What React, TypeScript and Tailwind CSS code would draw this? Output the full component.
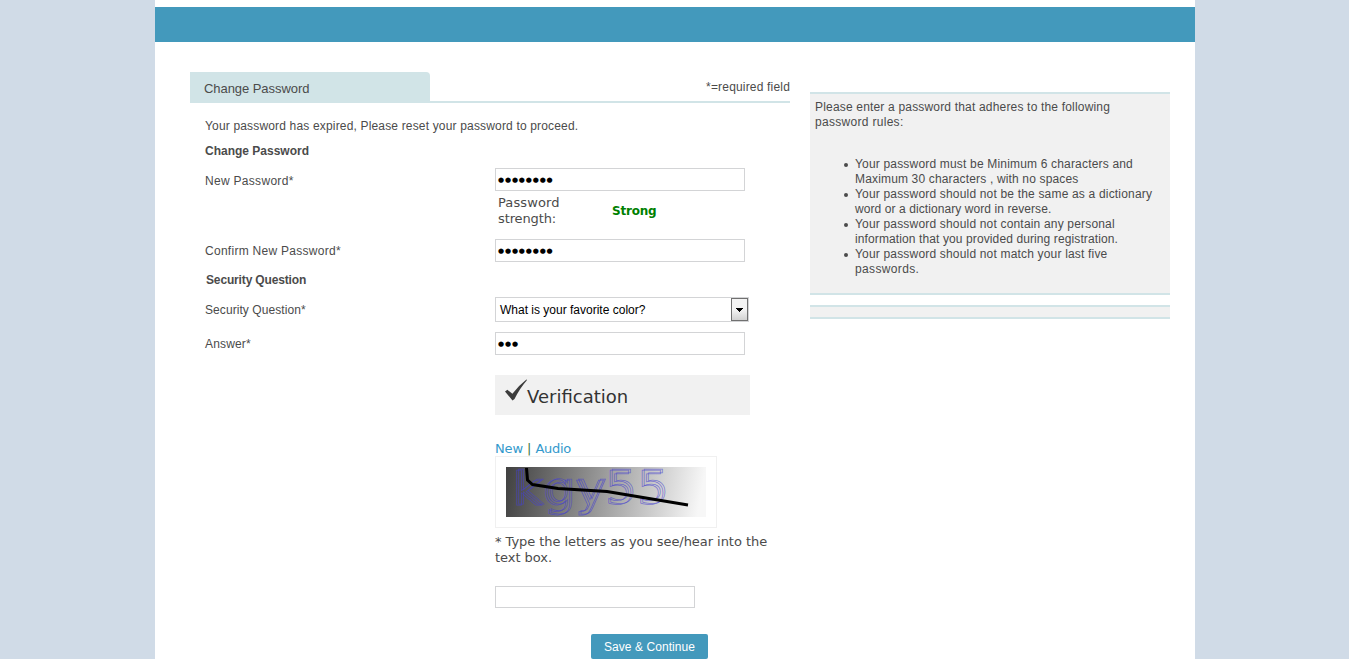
import type { ReactNode } from "react";

const verdana = "font-['DejaVu_Sans',sans-serif] text-[13px] leading-4";

function Field({ value = "", className = "" }: { value?: string; className?: string }) {
  return (
    <div className={`flex h-[23px] w-[250px] items-center border border-[#d3d4d6] bg-white pl-[2px] font-['DejaVu_Sans',sans-serif] text-[7px] leading-none tracking-[0.83px] text-black ${className}`}>
      <span className="relative top-px">{value}</span>
    </div>
  );
}

function Row({ label, className = "", labelClass = "", children }: { label: string; className?: string; labelClass?: string; children?: ReactNode }) {
  return (
    <div className={`flex items-start ${className}`}>
      <label className={`w-[305px] shrink-0 pl-[15px] ${labelClass}`}>{label}</label>
      {children}
    </div>
  );
}

const rules = [
  { first: "Your password must be Minimum 6 characters and", second: "Maximum 30 characters , with no spaces", tight: "tracking-[0.16px]" },
  { first: "Your password should not be the same as a dictionary", second: "word or a dictionary word in reverse.", tight: "tracking-[0.08px]" },
  { first: "Your password should not contain any personal", second: "information that you provided during registration.", tight: "tracking-[0.11px]" },
  { first: "Your password should not match your last five", second: "passwords.", tight: "tracking-[0.35px]" },
];

const glyphs = [
  { c: "k", x: 6, y: 38, w: 30 },
  { c: "g", x: 37, y: 38, w: 31 },
  { c: "y", x: 69, y: 38, w: 30 },
  { c: "5", x: 99, y: 37, w: 30 },
  { c: "5", x: 131, y: 37, w: 30 },
];

function Captcha() {
  return (
    <svg width="200" height="50" viewBox="0 0 200 50" className="block overflow-visible">
      <defs>
        <linearGradient id="shade" gradientUnits="userSpaceOnUse" x1="0" y1="0" x2="194" y2="34">
          <stop offset="0" stopColor="#404040" />
          <stop offset="1" stopColor="#f7f7f7" />
        </linearGradient>
      </defs>
      <rect width="200" height="50" fill="url(#shade)" />
      <g fill="none" stroke="#4540d0" strokeOpacity="0.62" strokeWidth="0.75" fontFamily="DejaVu Sans" fontSize="46">
        {glyphs.map((g, i) => (
          <g key={i}>
            <text x={g.x} y={g.y} textLength={g.w} lengthAdjust="spacingAndGlyphs">{g.c}</text>
            <text x={g.x + 2} y={g.y - 1} textLength={g.w} lengthAdjust="spacingAndGlyphs">{g.c}</text>
          </g>
        ))}
      </g>
      <path d="M20.5 1 21.5 13 26.5 17.5 52 21.5 101 24.5 182 38" fill="none" stroke="#000" strokeWidth="3" />
    </svg>
  );
}

export default function App() {
  return (
    <div className="h-[659px] overflow-hidden bg-[#d0dbe7] font-['Liberation_Sans',Arial,sans-serif] text-[12px] leading-[15px] text-[#4b4b4b]">
      <div className="ml-[155px] h-full w-[1040px] bg-white pt-[7px]">
        <div className="h-[35px] bg-[#4399bc]" />
        <div className="flex pl-[35px] pt-[30px]">
          <main className="w-[600px]">
            <div className="flex h-[31px] justify-between border-b-2 border-[#d1e4e7]">
              <div className="h-[31px] w-[240px] rounded-tr-[4px] bg-[#d1e4e7] pl-[14px] pt-[9px] text-[13px] tracking-[-0.06px]">Change Password</div>
              <div className="pt-[8px] tracking-[0.18px]">*=required field</div>
            </div>
            <p className="pl-[15px] pt-[16px] tracking-[0.167px]">Your password has expired, Please reset your password to proceed.</p>
            <h2 className="pl-[15px] pt-[10px] font-bold">Change Password</h2>
            <Row label="New Password*" className="mt-[9px] h-[71px]" labelClass="pt-[6px] tracking-[0.3px]">
              <div>
                <Field value="●●●●●●●●" />
                <div className={`flex items-center pl-[3px] pt-1 ${verdana}`}>
                  <div className="w-[114px]">
                    <span className="tracking-[0.1px]">Password</span><br />
                    <span className="tracking-[-0.12px]">strength:</span>
                  </div>
                  <div className="font-bold text-[12px] tracking-[-0.2px] text-[#008000]">Strong</div>
                </div>
              </div>
            </Row>
            <Row label="Confirm New Password*" className="h-[34px]" labelClass="pt-[5px] tracking-[0.28px]">
              <Field value="●●●●●●●●" />
            </Row>
            <h2 className="pl-[16px] font-bold tracking-[-0.15px]">Security Question</h2>
            <Row label="Security Question*" className="mt-[9px] h-[35px]" labelClass="pt-[6px] tracking-[0.07px]">
              <div className="flex h-[25px] w-[254px] items-center justify-between border border-[#d3d4d6] pl-1 text-black">
                <span className="pt-0.5">What is your favorite color?</span>
                <div className="flex h-[23px] w-[17px] items-center justify-center border border-[#707070] bg-linear-to-b from-[#f4f4f4] from-50% to-[#d2d2d2]">
                  <svg width="7" height="4" viewBox="0 0 7 4"><path d="M0 0H7V1H6V2H5V3H4V4H3V3H2V2H1V1H0Z" /></svg>
                </div>
              </div>
            </Row>
            <Row label="Answer*" className="h-[43px]" labelClass="pt-[5px] tracking-[0.15px]">
              <Field value="●●●" />
            </Row>
            <section className={`ml-[305px] ${verdana}`}>
              <div className="flex h-10 w-[255px] bg-[#f1f1f1] pl-[9px] text-[18px] leading-6 text-[#333]">
                <svg width="23" height="27" viewBox="0 0 23 27"><path d="M1 16.5 3.4 14.8 8.4 18.8Q14 11 22.7 4.2L22.7 5.5Q16 13 10.5 24L8.5 25.5Z" fill="#3c3c3c" /></svg>
                <h3 className="pt-[10px]">Verification</h3>
              </div>
              <div className="pt-[26px] tracking-[-0.1px] text-[#3399cc]">
                New <span className="text-[#3c763d]">|</span> <span className="tracking-[-0.3px]">Audio</span>
              </div>
              <div className="-mt-px h-[72px] w-[222px] border border-[#f0f0f0] p-[10px]">
                <Captcha />
              </div>
              <p className="w-[285px] pt-[6px] tracking-[-0.05px]">* Type the letters as you see/hear into the text box.</p>
              <Field className="mt-5 h-[22px]! w-[200px]!" />
            </section>
            <button className="ml-[401px] mt-[26px] block h-[25px] w-[117px] rounded-[2px] bg-[#4399bc] pt-px text-[12px] tracking-[0.07px] text-white">Save &amp; Continue</button>
          </main>
          <aside className="ml-5 w-[360px] pt-5 tracking-[0.18px]">
            <div className="h-[203px] border-y-2 border-[#d1e4e7] bg-[#f1f1f1] px-[5px] pt-[6px]">
              <p className="w-[320px]">Please enter a password that adheres to the following <span className="tracking-[0.3px]">password rules:</span></p>
              <ul className="pl-10 pt-[27px]">
                {rules.map((rule) => (
                  <li key={rule.first} className="-ml-[11px] flex gap-[7px]">
                    <span className="mt-[6px] size-[4px] shrink-0 rounded-full bg-[#4b4b4b]" />
                    <span className="whitespace-nowrap">{rule.first}<br /><span className={rule.tight}>{rule.second}</span></span>
                  </li>
                ))}
              </ul>
            </div>
            <div className="mt-[10px] h-[14px] border-y-2 border-[#d1e4e7] bg-[#f1f1f1]" />
          </aside>
        </div>
      </div>
    </div>
  );
}
